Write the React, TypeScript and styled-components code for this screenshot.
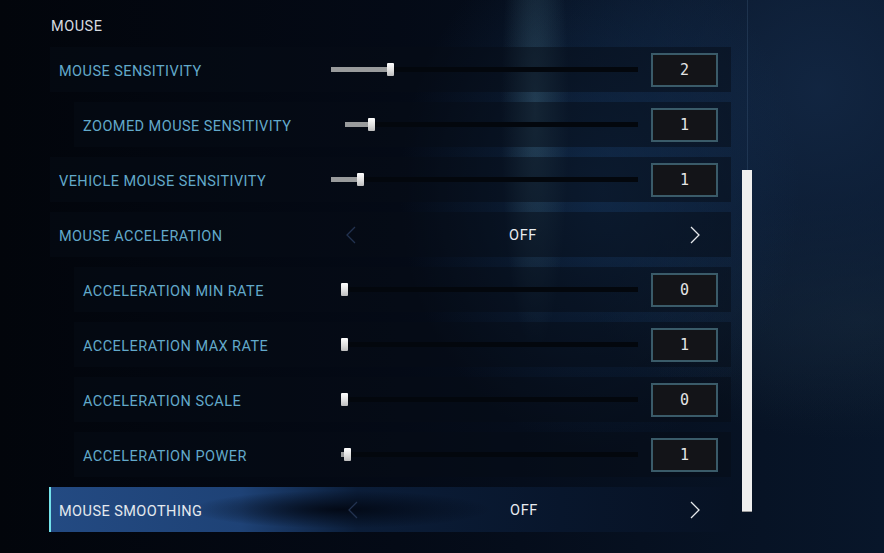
import styled, { createGlobalStyle } from "styled-components";

const GlobalStyle = createGlobalStyle`
  html, body {
    margin: 0;
    padding: 0;
    background: #03060c;
  }
  body {
    font-family: Roboto, "Liberation Sans", sans-serif;
  }
`;

const Screen = styled.div`
  width: 884px;
  height: 553px;
  overflow: hidden;
  display: flex;
  background:
    radial-gradient(ellipse 34px 240px at 535px 110px, rgba(70, 112, 132, 0.4), transparent),
    radial-gradient(ellipse 200px 260px at 600px 190px, rgba(22, 56, 96, 0.55), transparent),
    radial-gradient(ellipse 320px 330px at 820px 90px, rgba(18, 38, 66, 0.95), transparent),
    radial-gradient(ellipse 260px 120px at 860px 320px, rgba(20, 36, 52, 0.7), transparent),
    linear-gradient(90deg, #02050b 0%, #040a16 45%, #08162a 100%);
`;

const Panel = styled.section`
  width: 682px;
  padding-left: 49px;
  display: flex;
  flex-direction: column;
`;

const SectionTitle = styled.h2`
  margin: 0;
  height: 47px;
  padding: 14px 0 0 2px;
  box-sizing: border-box;
  font-size: 14.5px;
  line-height: 26px;
  font-weight: 400;
  letter-spacing: 0.5px;
  color: #d6dbe0;
`;

const RowList = styled.div`
  display: flex;
  flex-direction: column;
  gap: 10px;
`;

const Row = styled.div<{ $indent?: boolean; $active?: boolean }>`
  height: 45px;
  margin-left: ${(p) => (p.$active ? 0 : p.$indent ? 25 : 1)}px;
  display: flex;
  align-items: center;
  box-sizing: border-box;
  padding-right: 13px;
  background: ${(p) =>
    p.$active
      ? `radial-gradient(ellipse 150px 19px at 290px 50%, rgba(2, 8, 20, 0.95), transparent),
         linear-gradient(90deg, #234a82 0%, #1e4276 28%, #0b1d38 45%, #08162c 75%, #071224 100%)`
      : "rgba(6, 12, 22, 0.5)"};
  border-left: ${(p) => (p.$active ? "2px solid #74e2ea" : "none")};
`;

const Label = styled.span<{ $width: number; $active?: boolean }>`
  width: ${(p) => p.$width}px;
  flex: none;
  padding: 3px 0 0 ${(p) => (p.$active ? 8 : 9)}px;
  box-sizing: border-box;
  font-size: 14.5px;
  letter-spacing: 0.45px;
  color: ${(p) => (p.$active ? "#e4e9ee" : "#62a9ca")};
`;

const Track = styled.div`
  flex: 1;
  height: 5px;
  position: relative;
  background: #03070d;
  margin-right: 13px;
`;

const Fill = styled.div`
  height: 100%;
  background: #999b9c;
`;

const Thumb = styled.div`
  position: absolute;
  top: -4px;
  width: 7px;
  height: 13px;
  background: linear-gradient(#ffffff, #dcdcdc 60%, #bdbdbd);
  border-radius: 1px;
`;

const ValueBox = styled.div`
  width: 67px;
  height: 34px;
  flex: none;
  box-sizing: border-box;
  border: 2px solid #3a5b69;
  background: #131418;
  display: flex;
  align-items: center;
  justify-content: center;
  padding-top: 1px;
  font-family: "DejaVu Sans Mono", "Liberation Mono", monospace;
  font-size: 15px;
  color: #e4e4e4;
`;

const Chooser = styled.div`
  flex: 1;
  display: flex;
  align-items: center;
  justify-content: space-between;
  padding: 0 17px 0 14px;
`;

const ChoiceText = styled.span`
  padding-top: 1px;
  font-size: 14.5px;
  letter-spacing: 0.6px;
  color: #e8ecef;
`;

const ScrollColumn = styled.div`
  width: 10px;
  margin-left: 11px;
  display: flex;
  flex-direction: column;
  align-items: center;
`;

const ScrollLine = styled.div`
  width: 1px;
  height: 170px;
  background: rgba(60, 90, 120, 0.35);
`;

const ScrollThumb = styled.div`
  width: 10px;
  height: 342px;
  background: #efefef;
  border-bottom: 1px solid #9a9a9a;
  box-sizing: border-box;
`;

const Chevron = ({ dir, dim }: { dir: "left" | "right"; dim?: boolean }) => (
  <svg width="12" height="20" viewBox="0 0 12 20">
    <path
      d={dir === "left" ? "M10 2 L2 10 L10 18" : "M2 2 L10 10 L2 18"}
      fill="none"
      stroke={dim ? "#223250" : "#e6e9ec"}
      strokeWidth="1.3"
    />
  </svg>
);

type SliderRow = {
  kind: "slider";
  label: string;
  value: string;
  pos: number;
  labelWidth: number;
  indent?: boolean;
};
type ChoiceRow = {
  kind: "choice";
  label: string;
  value: string;
  active?: boolean;
};

const rows: (SliderRow | ChoiceRow)[] = [
  { kind: "slider", label: "MOUSE SENSITIVITY", value: "2", pos: 0.187, labelWidth: 281 },
  { kind: "slider", label: "ZOOMED MOUSE SENSITIVITY", value: "1", pos: 0.08, labelWidth: 271, indent: true },
  { kind: "slider", label: "VEHICLE MOUSE SENSITIVITY", value: "1", pos: 0.087, labelWidth: 281 },
  { kind: "choice", label: "MOUSE ACCELERATION", value: "OFF" },
  { kind: "slider", label: "ACCELERATION MIN RATE", value: "0", pos: 0, labelWidth: 267, indent: true },
  { kind: "slider", label: "ACCELERATION MAX RATE", value: "1", pos: 0, labelWidth: 267, indent: true },
  { kind: "slider", label: "ACCELERATION SCALE", value: "0", pos: 0, labelWidth: 267, indent: true },
  { kind: "slider", label: "ACCELERATION POWER", value: "1", pos: 0.01, labelWidth: 267, indent: true },
  { kind: "choice", label: "MOUSE SMOOTHING", value: "OFF", active: true },
];

const Slider = ({ pos }: { pos: number }) => (
  <Track>
    <Fill style={{ width: `calc(${pos} * (100% - 7px) + 3px)` }} />
    <Thumb style={{ left: `calc(${pos} * (100% - 7px))` }} />
  </Track>
);

export default function App() {
  return (
    <>
      <GlobalStyle />
      <Screen>
        <Panel>
          <SectionTitle>MOUSE</SectionTitle>
          <RowList>
            {rows.map((r) =>
              r.kind === "slider" ? (
                <Row key={r.label} $indent={r.indent}>
                  <Label $width={r.labelWidth}>{r.label}</Label>
                  <Slider pos={r.pos} />
                  <ValueBox>{r.value}</ValueBox>
                </Row>
              ) : (
                <Row key={r.label} $active={r.active}>
                  <Label $width={r.active ? 282 : 281} $active={r.active}>
                    {r.label}
                  </Label>
                  <Chooser>
                    <Chevron dir="left" dim />
                    <ChoiceText>{r.value}</ChoiceText>
                    <Chevron dir="right" />
                  </Chooser>
                </Row>
              )
            )}
          </RowList>
        </Panel>
        <ScrollColumn>
          <ScrollLine />
          <ScrollThumb />
        </ScrollColumn>
      </Screen>
    </>
  );
}
